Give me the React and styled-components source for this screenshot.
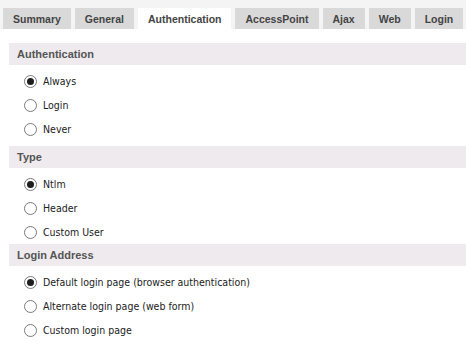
import React from "react";
import styled, { createGlobalStyle } from "styled-components";

const Global = createGlobalStyle`
  html, body { margin: 0; padding: 0; background: #ffffff; }
  body { font-family: "Liberation Sans", Arial, sans-serif; }
`;

const Page = styled.div`
  width: 466px;
  height: 344px;
  overflow: hidden;
  background: #ffffff;
`;

const TabBar = styled.div`
  display: flex;
  align-items: flex-end;
  gap: 4px;
  height: 29px;
  padding: 8px 0 0 3px;
  box-sizing: border-box;
  background: #f4f4f4;
`;

const Tab = styled.div`
  height: 21px;
  padding: 0 10px;
  display: flex;
  align-items: center;
  font: bold 10.5px "Liberation Sans", Arial, sans-serif;
  color: #444444;
  background: ${(p) => (p.$active ? "#ffffff" : "#d9d9d9")};
  white-space: nowrap;
`;

const Content = styled.div`
  padding: 14px 0 0 9px;
`;

const SectionHeader = styled.div`
  height: 22px;
  display: flex;
  align-items: center;
  padding-left: 8px;
  background: #eeeaed;
  font: bold 11px "Liberation Sans", Arial, sans-serif;
  color: #555555;
`;

const List = styled.div`
  display: flex;
  flex-direction: column;
  padding: 4px 0 ${(p) => p.$bottom}px;
`;

const Row = styled.label`
  height: 24px;
  display: flex;
  align-items: center;
  gap: 6px;
  padding-left: 15px;
  font: 10.5px "DejaVu Sans Condensed", "DejaVu Sans", sans-serif;
  color: #222222;
`;

const Radio = styled.span`
  width: 13px;
  height: 13px;
  box-sizing: border-box;
  border-radius: 50%;
  border: 1px solid #7a7a7a;
  background: #ffffff;
  display: flex;
  align-items: center;
  justify-content: center;
  &::after {
    content: "";
    width: 7px;
    height: 7px;
    border-radius: 50%;
    background: ${(p) => (p.$checked ? "#1e1e1e" : "transparent")};
  }
`;

const tabs = ["Summary", "General", "Authentication", "AccessPoint", "Ajax", "Web", "Login"];

const sections = [
  { title: "Authentication", bottom: 5, options: ["Always", "Login", "Never"] },
  { title: "Type", bottom: 0, options: ["Ntlm", "Header", "Custom User"] },
  {
    title: "Login Address",
    bottom: 0,
    options: [
      "Default login page (browser authentication)",
      "Alternate login page (web form)",
      "Custom login page",
    ],
  },
];

export default function App() {
  return (
    <Page>
      <Global />
      <TabBar>
        {tabs.map((t) => (
          <Tab key={t} $active={t === "Authentication"}>
            {t}
          </Tab>
        ))}
      </TabBar>
      <Content>
        {sections.map((s) => (
          <div key={s.title}>
            <SectionHeader>{s.title}</SectionHeader>
            <List $bottom={s.bottom}>
              {s.options.map((o, i) => (
                <Row key={o}>
                  <Radio $checked={i === 0} />
                  {o}
                </Row>
              ))}
            </List>
          </div>
        ))}
      </Content>
    </Page>
  );
}
